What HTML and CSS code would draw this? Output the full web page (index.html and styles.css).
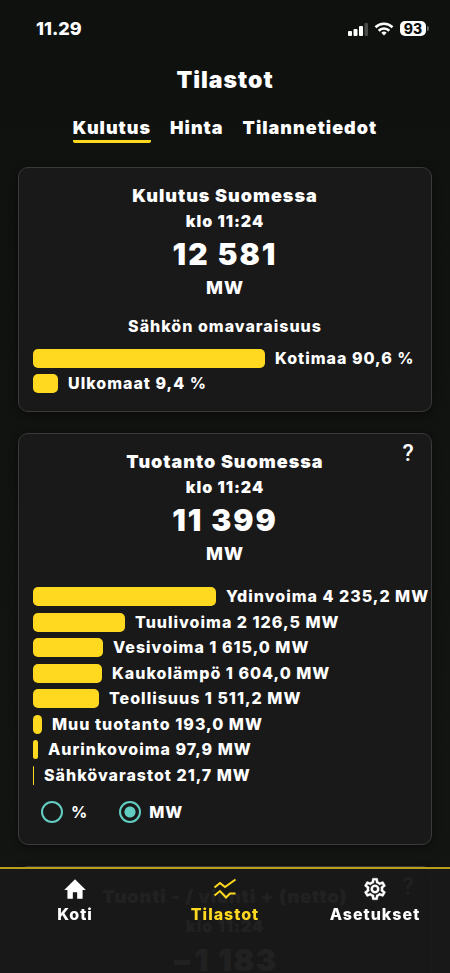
FILE: index.html
```html
<!DOCTYPE html>
<html lang="fi">
<head>
<meta charset="utf-8">
<meta name="viewport" content="width=device-width, initial-scale=1">
<title>Tilastot</title>
<link rel="stylesheet" href="styles.css">
</head>
<body>
<div class="app">
  <header class="status">
    <span class="clock">11.29</span>
    <div class="status-icons">
      <svg width="20" height="14" viewBox="0 0 20 14" aria-hidden="true"><g fill="#fff"><rect x="0" y="9" width="4" height="5" rx="1"/><rect x="5.500" y="7" width="4" height="7" rx="1"/><rect x="11" y="4" width="4" height="10" rx="1"/><rect x="16.500" y="1" width="3.500" height="13" rx="1" opacity=".25"/></g></svg>
      <svg width="20" height="14" viewBox="0 0 20 14" fill="none" stroke="#fff" stroke-width="2.6" aria-hidden="true"><path d="M1.5 5.2a12.2 12.2 0 0 1 17 0"/><path d="M4.7 8.7a7.6 7.6 0 0 1 10.6 0"/><path d="M10 13.5 7.3 10.8a3.8 3.8 0 0 1 5.4 0z" fill="#fff" stroke="none"/></svg>
      <span class="battery">93</span>
    </div>
  </header>
  <h1>Tilastot</h1>
  <nav class="tabs">
    <a class="tab active" href="#kulutus">Kulutus</a>
    <a class="tab" href="#hinta">Hinta</a>
    <a class="tab" href="#tilannetiedot">Tilannetiedot</a>
  </nav>
  <main>
    <section class="card" id="kulutus">
      <h2>Kulutus Suomessa</h2>
      <p class="time">klo 11:24</p>
      <p class="value">12 581</p>
      <p class="unit">MW</p>
      <h3>Sähkön omavaraisuus</h3>
      <ul class="bars">
        <li><span class="bar" style="width:232px"></span><span>Kotimaa 90,6 <span class="percent">%</span></span></li>
        <li><span class="bar" style="width:25px"></span><span>Ulkomaat 9,4 <span class="percent">%</span></span></li>
      </ul>
    </section>
    <section class="card">
      <button class="help" type="button" aria-label="Ohje">?</button>
      <h2>Tuotanto Suomessa</h2>
      <p class="time">klo 11:24</p>
      <p class="value">11 399</p>
      <p class="unit">MW</p>
      <ul class="bars production">
        <li><span class="bar" style="width:183px"></span>Ydinvoima 4 235,2 MW</li>
        <li><span class="bar" style="width:92px"></span>Tuulivoima 2 126,5 MW</li>
        <li><span class="bar" style="width:70px"></span>Vesivoima 1 615,0 MW</li>
        <li><span class="bar" style="width:69px"></span>Kaukolämpö 1 604,0 MW</li>
        <li><span class="bar" style="width:66px"></span>Teollisuus 1 511,2 MW</li>
        <li><span class="bar" style="width:9px"></span>Muu tuotanto 193,0 MW</li>
        <li><span class="bar" style="width:5px"></span>Aurinkovoima 97,9 MW</li>
        <li><span class="bar" style="width:1px"></span>Sähkövarastot 21,7 MW</li>
      </ul>
      <div class="choices">
        <label><input type="radio" name="unit"><span class="percent">%</span></label>
        <label><input type="radio" name="unit" checked>MW</label>
      </div>
    </section>
    <section class="card net">
      <button class="help" type="button" aria-label="Ohje">?</button>
      <h2>Tuonti - / vienti + (netto)</h2>
      <p class="time">klo 11:24</p>
      <p class="value">−1 183</p>
    </section>
  </main>
</div>
<nav class="bottom">
  <a href="#koti">
    <svg width="26" height="26" viewBox="0 0 24 24" fill="currentColor" aria-hidden="true"><path d="M10 21v-6h4v6h5v-8h3L12 3 2 13h3v8z"/></svg>
    Koti
  </a>
  <a class="active" href="#tilastot">
    <svg width="26" height="26" viewBox="0 0 26 26" fill="none" stroke="currentColor" stroke-width="2" aria-hidden="true"><path d="M2.500 11.500 8 7l5 4 10.500-7.500M2.500 19.500 8 15l6 6.500 4-4h5.500"/></svg>
    Tilastot
  </a>
  <a href="#asetukset">
    <svg width="26" height="26" viewBox="0 0 24 24" fill="currentColor" stroke="currentColor" stroke-width=".3" aria-hidden="true"><path d="M19.430 12.980c.04-.32.070-.64.070-.98s-.03-.66-.07-.98l2.110-1.650c.19-.15.240-.42.120-.64l-2-3.460c-.09-.16-.26-.25-.44-.25-.06 0-.12.010-.17.030l-2.490 1c-.52-.4-1.080-.73-1.690-.98l-.38-2.650C14.460 2.180 14.250 2 14 2h-4c-.25 0-.46.180-.49.420l-.38 2.650c-.61.250-1.170.590-1.690.980l-2.490-1c-.06-.02-.12-.03-.18-.03-.17 0-.34.090-.43.250l-2 3.460c-.13.220-.07.490.120.640l2.110 1.650c-.04.320-.07.650-.07.980s.03.660.070.980l-2.110 1.650c-.19.150-.24.420-.12.640l2 3.460c.09.160.260.250.440.250.06 0 .12-.01.17-.03l2.490-1c.52.400 1.080.730 1.690.980l.38 2.650c.03.240.240.420.490.420h4c.25 0 .46-.18.490-.42l.38-2.650c.61-.25 1.170-.59 1.690-.98l2.490 1c.06.020.12.030.18.030.17 0 .34-.09.430-.25l2-3.460c.12-.22.070-.49-.12-.64zM17.450 11.270c.04.310.050.520.050.730s-.02.430-.05.730l-.14 1.130.89.700 1.080.840-.7 1.210-1.270-.51-1.040-.42-.9.680c-.43.320-.84.560-1.250.730l-1.060.43-.16 1.130-.2 1.350h-1.400l-.19-1.350-.16-1.130-1.060-.43c-.43-.18-.83-.41-1.230-.71l-.91-.7-1.060.43-1.270.51-.7-1.210 1.080-.84.890-.7-.14-1.130c-.03-.31-.05-.54-.05-.74s.02-.43.050-.73l.14-1.130-.89-.7-1.080-.84.700-1.210 1.270.51 1.040.42.900-.68c.43-.32.840-.56 1.250-.73l1.060-.43.160-1.130.2-1.350h1.390l.19 1.350.16 1.130 1.060.43c.43.180.830.410 1.230.710l.91.700 1.060-.43 1.270-.51.700 1.210-1.070.85-.89.700zM12 8a4 4 0 1 0 0 8 4 4 0 0 0 0-8m0 6a2 2 0 1 1 0-4 2 2 0 0 1 0 4"/></svg>
    Asetukset
  </a>
</nav>
</body>
</html>
```
FILE: styles.css
```css
* {
  box-sizing: border-box;
}

html {
  height: 100%;
  overflow: hidden;
}

body {
  height: 100%;
  margin: 0;
  overflow: hidden;
  background: linear-gradient(#0e110e, #131512);
  color: #fff;
  font: 800 16px/24px Inter, sans-serif;
  letter-spacing: 1px;
}

h1, h2, h3, p, ul {
  margin: 0;
  padding: 0;
  font-weight: 900;
  text-align: center;
}

a {
  color: inherit;
  text-decoration: none;
}

.status {
  display: flex;
  align-items: center;
  justify-content: space-between;
  height: 57px;
  padding: 0 22px 0 36px;
}

.clock {
  font-size: 18px;
  letter-spacing: 0;
}

.status-icons {
  display: flex;
  align-items: center;
  gap: 6px;
}

.battery {
  position: relative;
  width: 26px;
  height: 15px;
  margin-right: 2px;
  border-radius: 5px;
  background: #fff;
  color: #0e110e;
  font-size: 14px;
  line-height: 15px;
  letter-spacing: 0;
  text-align: center;
}

.battery::after {
  content: "";
  position: absolute;
  top: 5px;
  left: 27px;
  width: 2px;
  height: 5px;
  border-radius: 0 2px 2px 0;
  background: #666;
}

h1 {
  padding-top: 7px;
  font-size: 23px;
  line-height: 32px;
}

.tabs {
  display: flex;
  justify-content: center;
  gap: 19px;
  margin-bottom: 24px;
  padding-top: 20px;
  font-size: 18px;
  font-weight: 900;
}

.tab {
  height: 27px;
  border-bottom: 3px solid transparent;
}

.tab.active {
  background: linear-gradient(#ffd91f, #ffd91f) bottom / 100% 3px no-repeat border-box;
  border-radius: 2px;
}

main {
  display: flex;
  flex-direction: column;
  gap: 21px;
  padding: 0 18px;
}

.card {
  position: relative;
  padding: 16px 14px 18px;
  border: 1px solid #3a3a3a;
  border-radius: 10px;
  background: #191919;
  box-shadow: 0 2px 8px #0006;
}

h2 {
  font-size: 18px;
}

.time {
  font-size: 16px;
  line-height: 26px;
}

.value {
  font-size: 30px;
  line-height: 40px;
  letter-spacing: 2px;
}

.unit {
  font-size: 18px;
  font-weight: 800;
  line-height: 28px;
}

h3 {
  padding-top: 12px;
  font-size: 16px;
  font-weight: 800;
}

.bars {
  display: flex;
  flex-direction: column;
  justify-content: space-between;
  gap: 6px;
  margin-top: 11px;
  font-weight: 800;
  list-style: none;
  white-space: nowrap;
}

.production {
  min-height: 198px;
  margin-top: 19px;
}

.bars li {
  display: flex;
  align-items: center;
  gap: 10px;
  line-height: 19px;
}

.bar {
  flex: none;
  height: 19px;
  border-radius: 5px;
  background: #ffd91f;
}

.percent {
  font-weight: 700;
}

.choices {
  display: flex;
  gap: 31px;
  padding: 15px 0 2px 8px;
}

.choices label {
  display: flex;
  align-items: center;
  gap: 8px;
}

.choices input {
  appearance: none;
  width: 22px;
  height: 22px;
  margin: 0;
  border: 2px solid #62cdc3;
  border-radius: 50%;
}

.choices input:checked {
  background: radial-gradient(circle, #62cdc3 5px, transparent 6px);
}

.help {
  position: absolute;
  top: 6px;
  right: 10px;
  width: 26px;
  height: 28px;
  padding: 0;
  border: 0;
  background: none;
  color: #fff;
  font: 500 23px/28px Roboto, sans-serif;
}

.net h2 {
  line-height: 28px;
}

.net .time {
  line-height: 30px;
}

.net .value {
  line-height: 38px;
}

.bottom {
  position: fixed;
  right: 0;
  bottom: 0;
  left: 0;
  display: grid;
  grid-template-columns: repeat(3, 1fr);
  height: 106px;
  padding-top: 7px;
  border-top: 2px solid #b99e1b;
  background: #191919f6;
}

.bottom a {
  display: flex;
  flex-direction: column;
  align-items: center;
}

.bottom .active {
  color: #ffd91f;
}
```
